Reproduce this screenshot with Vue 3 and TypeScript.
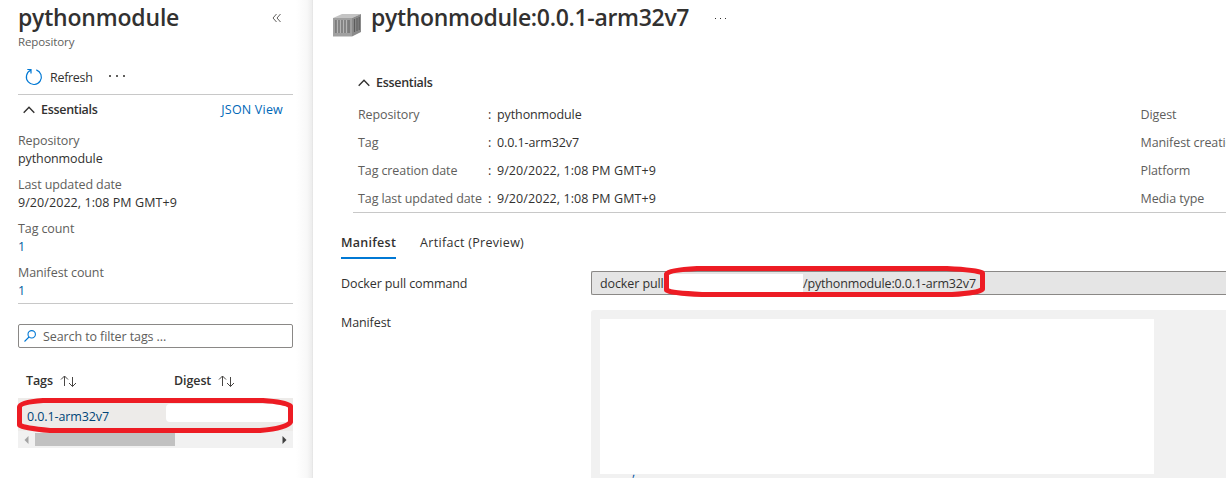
<script setup lang="ts">
interface Field { label: string; value: string }
const summary: Field[] = [
  { label: 'Repository', value: 'pythonmodule' },
  { label: 'Last updated date', value: '9/20/2022, 1:08 PM GMT+9' },
  { label: 'Tag count', value: '1' },
  { label: 'Manifest count', value: '1' },
]
const details: Field[] = [
  { label: 'Repository', value: 'pythonmodule' },
  { label: 'Tag', value: '0.0.1-arm32v7' },
  { label: 'Tag creation date', value: '9/20/2022, 1:08 PM GMT+9' },
  { label: 'Tag last updated date', value: '9/20/2022, 1:08 PM GMT+9' },
]
const extra: string[] = ['Digest', 'Manifest creation date', 'Platform', 'Media type']
const columns: string[] = ['Tags', 'Digest']
</script>

<template>
  <div class="page">
    <aside class="side">
      <header class="side-head">
        <h1 class="title">pythonmodule</h1>
        <svg class="collapse" width="10" height="10" viewBox="0 0 10 10"><path d="M4.500 1 1 5l3.500 4M8.500 1 5 5l3.500 4" /></svg>
      </header>
      <div class="subtitle">Repository</div>
      <div class="toolbar">
        <svg class="refresh" width="18" height="18" viewBox="0 0 18 18"><path d="M11.300 1.900A7.500 7.500 0 1 1 5.500 2.300M2.300 1.500H6V5.500" /></svg>
        <span class="refresh-label">Refresh</span>
        <span class="dots"><i /><i /><i /></span>
      </div>
      <div class="essentials">
        <svg class="chevron" width="12" height="8" viewBox="0 0 12 8"><path d="M.7 6.700 6 1.200l5.300 5.500" /></svg>
        <b>Essentials</b>
        <a class="json">JSON View</a>
      </div>
      <dl class="summary">
        <div v-for="(f, i) in summary" :key="f.label" class="pair">
          <dt>{{ f.label }}</dt>
          <dd :class="{ date: i === 1, link: i > 1 }">{{ f.value }}</dd>
        </div>
      </dl>
      <div class="search">
        <svg width="12" height="12" viewBox="0 0 12 12"><circle cx="7.700" cy="4.300" r="3.700" /><path d="M5 7 .5 11.500" /></svg>
        <span>Search to filter tags ...</span>
      </div>
      <div class="table">
        <div class="thead">
          <div v-for="c in columns" :key="c" class="th">
            <b>{{ c }}</b>
            <svg width="17" height="12" viewBox="0 0 17 12"><path d="M4.500 11V1M1 4.500 4.500 1 8 4.500M12.500 2v9.500M9 8l3.500 3.500L16 8" /></svg>
          </div>
        </div>
        <div class="row"><span>0.0.1-arm32v7</span><span class="blank" /></div>
        <div class="scroll">
          <svg width="5" height="8" viewBox="0 0 5 8"><path d="M4.500 0v8L.5 4z" fill="#a3a3a3" /></svg>
          <div class="thumb" />
          <svg class="right" width="5" height="8" viewBox="0 0 5 8"><path d="M.5 0v8l4-4z" fill="#404040" /></svg>
        </div>
        <svg class="mark" width="278" height="38" viewBox="0 0 278 38"><path d="M4.500 11Q5 6 28 4.500H248Q270 6 275.500 10V26Q272 32 245 34.500H35Q8 32 4.500 29Z" /></svg>
      </div>
    </aside>

    <main class="main">
      <header class="main-head">
        <svg class="box" width="28" height="23" viewBox="0 0 28 23">
          <path d="M0 4 9 0h19l-9 4z" fill="#c4c4c4" />
          <path d="M0 4h19v18.500H0z" fill="#a0a0a0" />
          <path d="M19 4 28 0v18l-9 4.500z" fill="#8a8a8a" />
          <path d="M2 6h15v13H2z" fill="#7c7c7c" />
          <path d="M4.500 6v13M7.500 6v13M10.500 6v13M13.500 6v13" stroke="#b4b4b4" stroke-width="1.300" />
          <path d="M21.500 5v13M24 4v13M26.200 3v13" stroke="#5c5c5c" stroke-width="1.100" />
        </svg>
        <h2 class="title wide">pythonmodule:0.0.1-arm32v7</h2>
        <span class="dots small"><i /><i /><i /></span>
      </header>
      <section class="info">
        <div class="essentials">
          <svg class="chevron" width="12" height="8" viewBox="0 0 12 8"><path d="M.7 6.700 6 1.200l5.300 5.500" /></svg>
          <b>Essentials</b>
        </div>
        <div class="grid">
          <div v-for="(f, i) in details" :key="f.label" class="line">
            <span class="key">{{ f.label }}</span><span class="colon">:</span>
            <span class="val" :class="{ date: i > 1 }">{{ f.value }}</span>
            <span class="key">{{ extra[i] }}</span>
          </div>
        </div>
      </section>
      <nav class="tabs"><b class="active">Manifest</b><span class="tab">Artifact (Preview)</span></nav>
      <div class="form">
        <label class="lbl-pull">Docker pull command</label>
        <div class="field">
          <span class="cmd">docker pull</span><span class="hidden" /><span class="path">/pythonmodule:0.0.1-arm32v7</span>
          <svg class="mark" width="324" height="36" viewBox="0 0 324 36"><path d="M4.500 10Q7 6 35 4.500H285Q315 6 320.500 9V25Q317 29 290 30.500H40Q8 29 4.500 26Z" /></svg>
        </div>
        <label class="lbl-man">Manifest</label>
        <div class="code"><div class="blank" /><span class="tail">,</span></div>
      </div>
    </main>
  </div>
</template>

<style>
body { margin: 0; overflow: hidden; background: #fff; }
</style>

<style scoped>
.page { display: flex; width: 1226px; height: 478px; overflow: hidden; font: 12.5px/18px "Open Sans", "Noto Sans", sans-serif; color: #323130; white-space: nowrap; letter-spacing: -.1px; }
svg { display: block; flex: none; fill: none; }
b { font-weight: 600; letter-spacing: -.3px; }
.side { box-sizing: border-box; flex: none; width: 313px; padding: 2px 20px 0 18px; background: linear-gradient(90deg, transparent 296px, #f8f8f8 307px, #ededed 312px, #e0e0e0 313px); }
.side-head { display: flex; align-items: center; height: 32px; justify-content: space-between; }
.title { margin: 0 0 2px; font-size: 23px; line-height: 30px; font-weight: 600; letter-spacing: -.2px; }
.title.wide { letter-spacing: -.31px; }
.collapse { margin-right: 11px; stroke: #605e5c; }
.subtitle { height: 16px; line-height: 16px; font-size: 11.500px; color: #605e5c; }
.toolbar { display: flex; align-items: center; height: 34px; margin-top: 10px; border-bottom: 1px solid #c8c8c8; width: 275px; }
.refresh { margin: 0 7px 0 7px; stroke: #0078d4; stroke-width: 1.200; }
.refresh-label { padding-top: 2px; letter-spacing: -.3px; }
.dots { display: flex; gap: 5px; margin-left: 16px; }
.toolbar .dots { margin-bottom: 2px; }
.dots i { width: 2px; height: 2px; background: #605e5c; }
.dots.small { gap: 4px; margin: 0 0 0 26px; }
.dots.small i { width: 1px; height: 1px; background: #323130; }
.essentials { display: flex; align-items: center; height: 29px; width: 265px; }
.chevron { margin: 0 6px 0 5px; stroke: #323130; stroke-width: 1.400; }
.json { margin-left: auto; color: #0067b8; letter-spacing: .2px; }
.summary { box-sizing: border-box; width: 275px; height: 180px; margin: 0; padding-top: 8px; border-bottom: 1px solid #c8c8c8; }
.pair { height: 44px; }
dt, .key { color: #605e5c; }
dd { margin: 0; }
.date { letter-spacing: .07px; }
.link { color: #005a9e; }
.search { box-sizing: border-box; display: flex; align-items: center; gap: 7px; width: 275px; height: 24px; margin-top: 20px; padding-left: 5px; border: 1px solid #8a8886; border-radius: 2px; color: #605e5c; }
.search span { padding-top: 2px; }
.search svg { stroke: #0078d4; stroke-width: 1.100; }
.table { position: relative; width: 275px; }
.thead { display: flex; padding: 15px 0 0 8px; height: 35px; }
.th { display: flex; flex: none; align-items: center; height: 35px; width: 148px; gap: 7px; }
.th b { letter-spacing: -.1px; }
.th svg { stroke: #484644; }
.row { display: flex; align-items: center; justify-content: space-between; height: 33px; padding: 0 5px 0 9px; background: #edebe9; color: #004578; }
.row .blank { width: 122px; height: 18px; margin-top: -3px; background: #fff; border-radius: 4px 0 0 4px; }
.row > span:first-child { padding-top: 4px; }
.scroll { display: flex; align-items: center; height: 17px; background: #f1f1f1; padding: 0 6px; }
.thumb { width: 140px; height: 13px; background: #c1c1c1; margin-left: 6px; }
.scroll .right { margin-left: auto; }
.mark { position: absolute; stroke: #ed1c24; stroke-width: 5; stroke-linejoin: round; }
.table .mark { left: -3px; top: 48px; }
.main { flex: 1; min-width: 0; padding: 2px 0 0 20px; }
.main-head { display: flex; height: 32px; align-items: center; }
.box { margin: 14px 10px 0 0; }
.info { margin: 34px 0 0 20px; border-bottom: 1px solid #c8c8c8; height: 144px; }
.grid { padding: 4px 0 0 5px; }
.line { display: grid; grid-template-columns: 130px 9px 643.5px auto; height: 28px; line-height: 28px; }
.tabs { display: flex; gap: 24px; height: 30px; padding: 16px 0 0 8px; line-height: 28px; }
.active { border-bottom: 2px solid #0078d4; letter-spacing: .27px; }
.tab { letter-spacing: .3px; }
.form { display: grid; grid-template-columns: 250px 1fr; padding: 12px 0 0 8px; }
.field { position: relative; box-sizing: border-box; display: flex; align-items: center; height: 24px; padding-left: 8px; border: 1px solid #8a8886; border-right: 0; border-radius: 2px 0 0 2px; background: #e5e5e5; }
.field .mark { left: 70px; top: -8px; }
.cmd, .path { padding-top: 2px; }
.path { letter-spacing: -.15px; }
.cmd { width: 68px; }
.hidden { width: 135px; height: 18px; background: #fff; }
label { line-height: 26px; height: 24px; }
.lbl-man { margin-top: 15px; }
.code { height: 180px; margin-top: 15px; padding: 9px; background: #f1f1f1; border-radius: 3px 0 0 0; box-sizing: border-box; }
.code .blank { width: 554px; height: 155px; background: #fff; }
.tail { display: block; margin: -11px 0 0 32px; color: #0451a5; }
</style>
